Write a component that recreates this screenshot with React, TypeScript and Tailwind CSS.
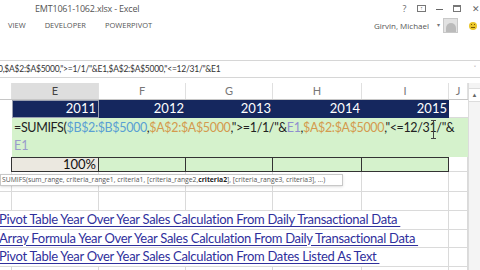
import React from "react";

const cellFont = { fontFamily: "Lato, 'Noto Sans', sans-serif" };

const colW = ["w-[12px]", "w-[87px]", "w-[87px]", "w-[87px]", "w-[89px]", "w-[87px]", "w-[19px]"];
const letters = ["", "E", "F", "G", "H", "I", "J"];
const years = ["2011", "2012", "2013", "2014", "2015"];

const links = [
  "Pivot Table Year Over Year Sales Calculation From Daily Transactional Data ",
  "Array Formula Year Over Year Sales Calculation From Daily Transactional Data ",
  "Pivot Table Year Over Year Sales Calculation From Dates Listed As Text ",
];

const GridRow = ({ h }: { h: string }) => (
  <div className={`flex ${h} shrink-0 border-b border-[#dadada]`}>
    {colW.map((w, i) => (
      <div key={i} className={`${w} shrink-0 border-r border-[#dadada]`} />
    ))}
  </div>
);

const App = () => {
  return (
    <div
      className="w-[480px] h-[270px] bg-white overflow-hidden flex flex-col text-[#444]"
      style={{ fontFamily: "'Open Sans', 'Noto Sans', sans-serif" }}
    >
      {/* title bar */}
      <div className="h-[17px] flex items-center shrink-0">
        <span className="ml-[35px] text-[9px] text-[#555] tracking-[-0.2px]">EMT1061-1062.xlsx - Excel</span>
        <div className="ml-auto flex items-center gap-[10px] mr-0 text-[#666] text-[9px]">
          <span className="w-[5px] text-center">?</span>
          <span className="w-[9px] h-[7px] border border-[#777] flex items-center justify-center text-[5px] leading-none">↑</span>
          <span className="w-[7px] h-[1px] bg-[#666] mt-[2px]" />
          <span className="w-[8px] h-[7px] border border-[#777] border-t-2" />
          <span className="w-[9px] text-[9px] leading-none text-center">✕</span>
        </div>
      </div>

      {/* ribbon tabs */}
      <div className="h-[17px] flex items-center shrink-0">
        <span className="ml-[8px] text-[7.5px] text-[#555]">VIEW</span>
        <span className="ml-[19px] text-[7.5px] text-[#555]">DEVELOPER</span>
        <span className="ml-[19px] text-[7.5px] text-[#555]">POWERPIVOT</span>
        <div className="ml-auto flex items-center mr-[3px]">
          <span className="text-[8px] text-[#555]">Girvin, Michael</span>
          <span className="ml-[8px] text-[6px] text-[#777]">▾</span>
          <span className="ml-[3px] w-[15px] h-[15px] bg-[#e2e2e2] border border-[#c8c8c8] flex items-end justify-center overflow-hidden">
            <span className="w-[10px] h-[9px] rounded-t-full bg-[#bbbbbb]" />
          </span>
          <span className="ml-[11px] w-[8px] h-[8px] rounded-full bg-[#e9c628] relative overflow-hidden">
            <span className="absolute left-[2px] top-[2px] w-[1px] h-[1px] bg-[#7a5a00]" />
            <span className="absolute left-[5px] top-[2px] w-[1px] h-[1px] bg-[#7a5a00]" />
            <span className="absolute left-[2px] top-[5px] w-[4px] h-[1px] bg-[#7a5a00]" />
          </span>
        </div>
      </div>

      <div className="h-[26px] shrink-0" />

      {/* formula bar */}
      <div className="h-[18px] shrink-0 flex items-center border-t border-b border-[#d6d6d6]">
        <span className="ml-[-2px] text-[8.5px] tracking-[-0.25px] text-[#333] whitespace-nowrap" style={cellFont}>
          0,$A$2:$A$5000,"&gt;=1/1/"&amp;E1,$A$2:$A$5000,"&lt;=12/31/"&amp;E1
        </span>
        <span className="ml-auto mr-[4px] text-[7px] text-[#666]">˅</span>
      </div>

      <div className="h-[5px] shrink-0" />

      {/* sheet */}
      <div className="flex flex-1 min-h-0">
        <div className="w-[468px] shrink-0 flex flex-col relative" style={cellFont}>
          {/* column headers */}
          <div className="flex h-[17px] shrink-0 border-b border-[#c6c6c6]">
            {colW.map((w, i) => (
              <div
                key={i}
                className={`${w} shrink-0 flex items-center justify-center text-[11px] border-r border-[#e0e0e0] ${
                  i === 1 ? "bg-[#dedede] text-[#444]" : i === 0 ? "bg-white" : "bg-white text-[#777]"
                }`}
              >
                {letters[i]}
              </div>
            ))}
          </div>

          {/* years */}
          <div className="flex h-[18px] shrink-0">
            <div className="w-[12px] shrink-0" />
            {years.map((y, i) => (
              <div
                key={y}
                className={`${colW[i + 1]} shrink-0 bg-[#15275e] text-white text-[13px] flex items-center justify-end pr-[2px] ${
                  i === 0 ? "border border-[#9aa0b0]" : ""
                }`}
              >
                {y}
              </div>
            ))}
            <div className="w-[19px] shrink-0 border-b border-[#dadada]" />
          </div>

          {/* edit box */}
          <div className="flex h-[39px] shrink-0">
            <div className="w-[12px] shrink-0" />
            <div className="flex-1 bg-[#d5f2cc] pl-[2px] pt-[1px] text-[12.5px] leading-[18px] text-[#222] relative">
              <div className="whitespace-nowrap tracking-[-0.35px]">
                =SUMIFS(<span className="text-[#5a9fd3]">$B$2:$B$5000</span>,
                <span className="text-[#d49a4e]">$A$2:$A$5000</span>,"&gt;=1/1/"&amp;
                <span className="text-[#8f8fcf]">E1</span>,<span className="text-[#d49a4e]">$A$2:$A$5000</span>
                ,"&lt;=12/31/"&amp;
              </div>
              <div className="text-[#9a9acb]">E1</div>
              <span className="absolute left-[421px] top-[2px] w-[1px] h-[19px] bg-[#444]" />
              <span className="absolute left-[419px] top-[2px] w-[5px] h-[1px] bg-[#444]" />
              <span className="absolute left-[419px] top-[20px] w-[5px] h-[1px] bg-[#444]" />
            </div>
          </div>

          {/* 100% row */}
          <div className="flex h-[15px] shrink-0">
            <div className="w-[12px] shrink-0 border-r border-[#333]" />
            <div className="w-[87px] shrink-0 bg-[#ebe8e0] border-y border-r border-[#333] flex items-center justify-end pr-[2px] text-[13px] text-[#111]">
              100%
            </div>
            {colW.slice(2, 6).map((w, i) => (
              <div key={i} className={`${w} shrink-0 bg-[#d5f2cc] border-y border-r border-[#333]`} />
            ))}
            <div className="w-[19px] shrink-0 border-b border-r border-[#dadada]" />
          </div>

          <GridRow h="h-[20px]" />
          <GridRow h="h-[19px]" />

          {/* tooltip */}
          <div
            className="absolute left-0 top-[91px] h-[12px] w-[343px] bg-white border border-[#c8c8c8] shadow-sm flex items-center pl-[1px] text-[6.8px] text-[#555] whitespace-nowrap"
            style={{ fontFamily: "'Open Sans', sans-serif" }}
          >
            SUMIFS(sum_range, criteria_range1, criteria1, [criteria_range2, <b className="text-[#222]">criteria2</b>], [criteria_range3, criteria3], ...)
          </div>

          {links.map((t) => (
            <div key={t} className="flex h-[18.5px] shrink-0 border-b border-[#dadada]">
              <div className="w-[449px] shrink-0 border-r border-[#dadada] flex items-center overflow-hidden">
                <span className="ml-[-1px] text-[13px] text-[#2f2f9c] underline decoration-[#2f2f9c] underline-offset-2 whitespace-pre tracking-[-0.3px]">
                  {t}
                </span>
              </div>
              <div className="w-[19px] shrink-0 border-r border-[#dadada]" />
            </div>
          ))}
          <GridRow h="h-[19px]" />
        </div>

        {/* vertical scrollbar */}
        <div className="w-[12px] shrink-0 bg-[#f4f4f4] border-l border-[#dcdcdc] flex flex-col">
          <div className="h-[5px]" />
          <div className="h-[14px] bg-white border-y border-[#dcdcdc] flex items-center justify-center text-[6px] text-[#666]">▲</div>
        </div>
      </div>
    </div>
  );
};

export default App;
